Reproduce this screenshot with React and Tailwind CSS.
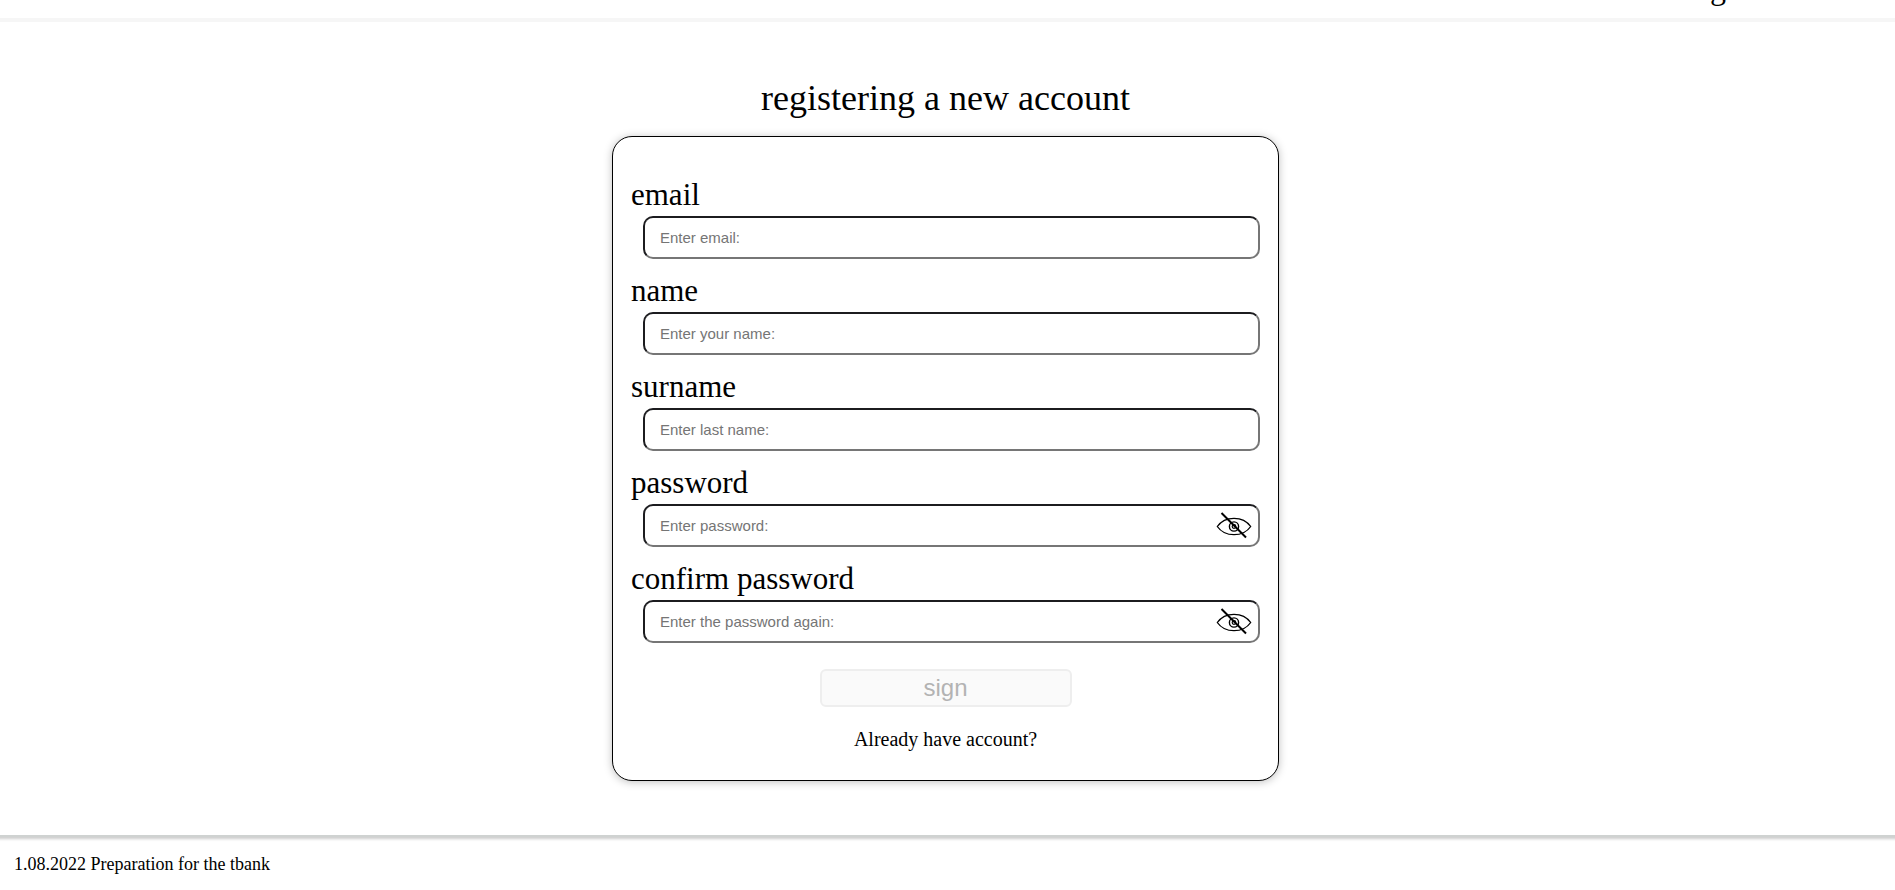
import { useState } from "react";

const fields = [
  { id: "email", label: "email", type: "email", placeholder: "Enter email:" },
  { id: "name", label: "name", type: "text", placeholder: "Enter your name:" },
  { id: "surname", label: "surname", type: "text", placeholder: "Enter last name:" },
  { id: "password", label: "password", type: "password", placeholder: "Enter password:" },
  { id: "confirm", label: "confirm password", type: "password", placeholder: "Enter the password again:" },
];

function EyeOff() {
  return (
    <svg viewBox="0 0 36 28" className="h-7 w-9" fill="none" stroke="black" aria-hidden="true">
      <path d="M1.3 14.5C5 9.2 11 6.3 18 6.3s13 2.9 16.7 8.2C31 19.8 25 22.7 18 22.7S5 19.8 1.3 14.5z" strokeWidth="1.3" />
      <circle cx="18" cy="14.5" r="4.6" strokeWidth="1.4" />
      <circle cx="18" cy="14.5" r="1.8" strokeWidth="1.2" />
      <path d="M5.5 1 30 25.5" strokeWidth="2" />
    </svg>
  );
}

function Field({ id, label, type, placeholder }) {
  const [shown, setShown] = useState(false);
  const secret = type === "password";
  return (
    <div className="flex flex-col">
      <label htmlFor={id} className="h-[39px] text-[31px] leading-9">
        {label}
      </label>
      <div className="relative ml-3">
        <input
          id={id}
          type={secret && shown ? "text" : type}
          placeholder={placeholder}
          className="block h-[43px] w-full rounded-[10px] border-2 border-t-[#1c1c1f] border-r-[#767676] border-b-[#767676] border-l-[#1c1c1f] bg-white px-[15px] font-['Liberation_Sans',Arial,sans-serif] text-[15px] placeholder:text-[#757575]"
        />
        {secret && (
          <button
            type="button"
            aria-label="Show password"
            onClick={() => setShown(!shown)}
            className="absolute top-2 right-2"
          >
            <EyeOff />
          </button>
        )}
      </div>
    </div>
  );
}

export default function App() {
  return (
    <div className="flex min-h-screen flex-col overflow-x-hidden bg-white font-['Liberation_Serif','Times_New_Roman',serif] text-black">
      <header className="flex h-[22px] items-end justify-end overflow-hidden border-b-4 border-[#f6f6f6] pr-36 pb-3">
        <a href="#login" className="text-[32px] leading-9">
          login
        </a>
      </header>

      <main className="flex flex-col items-center pt-14 pr-5 pl-4">
        <h1 className="text-4xl leading-10">registering a new account</h1>
        <form className="mt-[18px] flex w-full max-w-[667px] flex-col rounded-[20px] border border-black bg-white px-[18px] pt-10 pb-[29px] shadow-[0_1px_8px_rgba(0,0,0,0.25)]">
          <div className="flex flex-col gap-3.5">
            {fields.map((f) => (
              <Field key={f.id} {...f} />
            ))}
          </div>
          <button
            type="submit"
            disabled
            className="mt-[26px] h-[38px] w-[252px] self-center rounded-md border-2 border-[#eeeeee] bg-[#fafafa] font-['Liberation_Sans',Arial,sans-serif] text-2xl leading-8 text-[#b3b3b3]"
          >
            sign
          </button>
          <a href="#login" className="mt-5 self-center text-xl leading-6">
            Already have account?
          </a>
        </form>
      </main>

      <footer className="mt-[54px] border-t-2 border-[#cfd2d1] px-3.5 pt-[15px] text-lg leading-6 shadow-[inset_0_5px_3px_-3px_rgba(0,0,0,0.2)]">
        1.08.2022 Preparation for the tbank
      </footer>
    </div>
  );
}
